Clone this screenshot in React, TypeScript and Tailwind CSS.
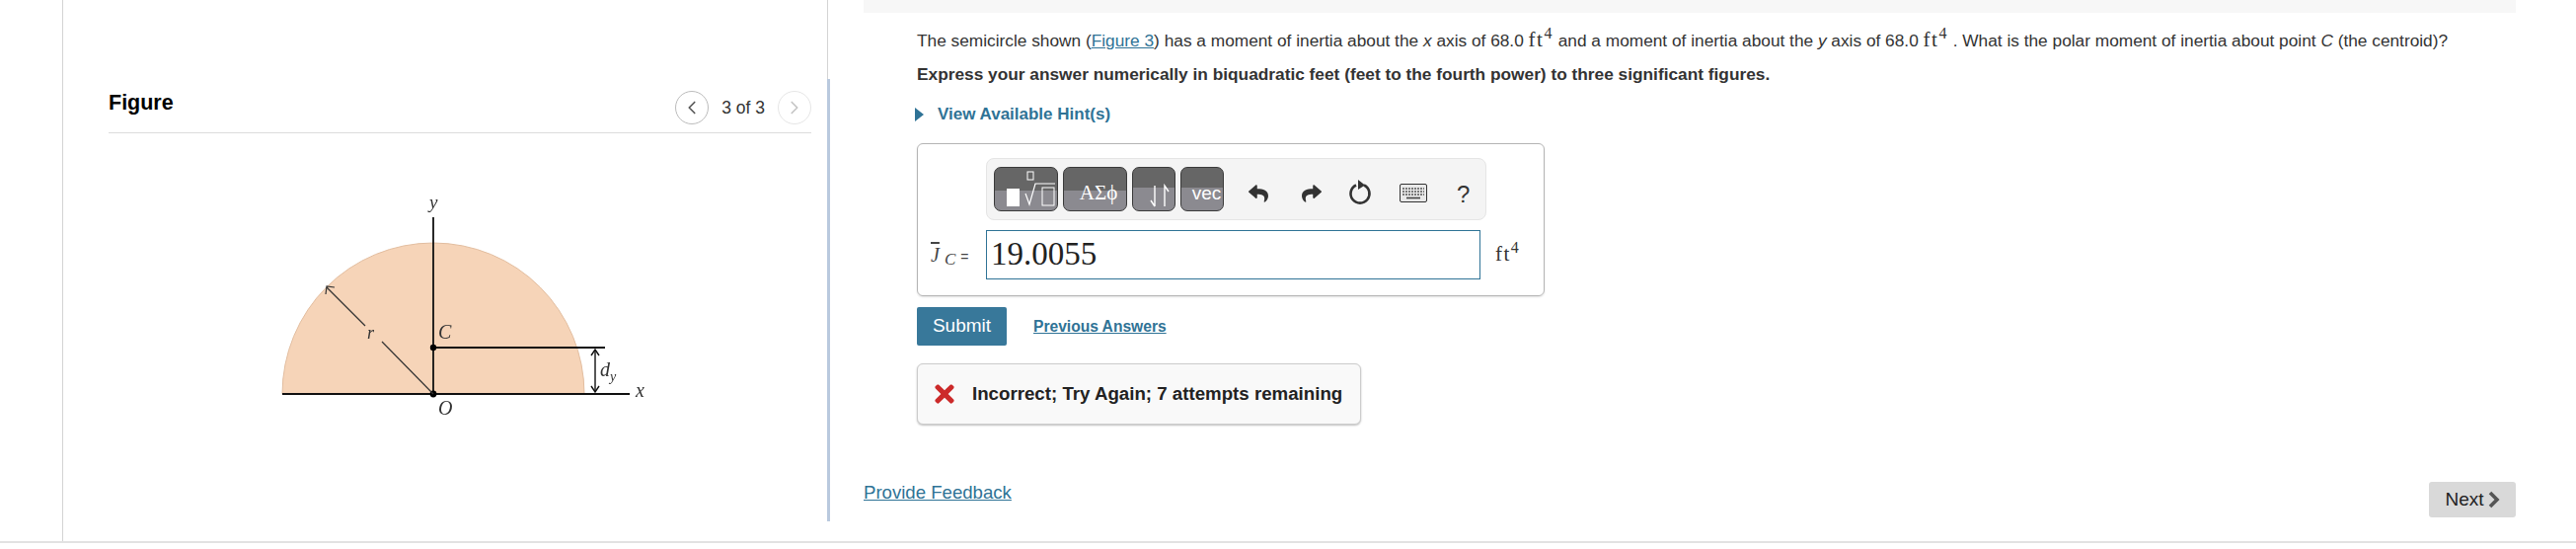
import React from 'react';
import { ChevronLeft, ChevronRight } from 'lucide-react';
import { FaReply, FaShare, FaTimes } from 'react-icons/fa';

const SERIF = 'font-["Liberation_Serif",serif]';

const Ft4: React.FC = () => (
  <span className={`${SERIF} text-[21px] tracking-[1.5px]`}>
    ft<span className="text-[16px] relative -top-[8px] leading-none">4</span>
  </span>
);

const ToolButton: React.FC<{ width: string; split: string; children: React.ReactNode }> = ({ width, split, children }) => (
  <div className={`relative h-[45px] ${width} ${split} rounded-[7px] border border-[#3a3a3a] overflow-hidden flex items-end justify-center`}>
    {children}
  </div>
);

const Diagram: React.FC = () => (
  <svg width="380" height="240" viewBox="0 -20 380 240" className="blur-[0.4px]">
    <path d="M6 189 A153 153 0 0 1 312 189 Z" fill="#f6d4b8" stroke="#e2bd9f" strokeWidth="1" />
    <line x1="159" y1="10" x2="159" y2="189" stroke="#111" strokeWidth="1.8" />
    <line x1="6" y1="189" x2="358" y2="189" stroke="#111" strokeWidth="1.8" />
    <line x1="159" y1="142" x2="333" y2="142" stroke="#111" strokeWidth="1.8" />
    <circle cx="159" cy="142" r="3.2" fill="#000" />
    <circle cx="159" cy="189" r="3.4" fill="#000" />
    <line x1="159" y1="189" x2="107" y2="136" stroke="#333" strokeWidth="1.2" />
    <line x1="90" y1="120" x2="51" y2="81" stroke="#333" strokeWidth="1.2" />
    <path d="M50 88 L51 80 L59 81" fill="none" stroke="#333" strokeWidth="1.2" />
    <line x1="323" y1="144" x2="323" y2="187" stroke="#111" strokeWidth="1.4" />
    <path d="M319 150 L323 144 L327 150 M319 181 L323 187 L327 181" fill="none" stroke="#111" strokeWidth="1.4" />
    <g fontFamily="Liberation Serif, serif" fontStyle="italic" fill="#333">
      <text x="155" y="1" fontSize="19">y</text>
      <text x="92" y="133" fontSize="18">r</text>
      <text x="164" y="133" fontSize="20">C</text>
      <text x="328" y="171" fontSize="20">d</text>
      <text x="338" y="176" fontSize="14">y</text>
      <text x="364" y="192" fontSize="20">x</text>
      <text x="164" y="210" fontSize="20">O</text>
    </g>
  </svg>
);

export default function App() {
  return (
    <div className="w-[2610px] h-[556px] bg-white overflow-hidden font-['Liberation_Sans',Arial,sans-serif] text-[#333]">
      <div className="flex h-[550px] border-b-2 border-[#e2e2e2]">
        {/* left gutter */}
        <div className="w-[64px] border-r border-[#d4d4d4]" />

        {/* figure panel */}
        <div className="w-[774px] pl-[46px] pr-[16px] pt-[92px]">
          <div className="flex items-start justify-between h-[43px] border-b border-[#dcdcdc]">
            <h2 className="mt-[1px] text-[21.5px] leading-[22px] font-bold text-black">Figure</h2>
            <div className="flex items-center gap-[13px]">
              <button className="w-[34px] h-[34px] rounded-full border border-[#bcbcbc] flex items-center justify-center">
                <ChevronLeft className="w-[22px] h-[22px] text-[#555]" strokeWidth={1.8} />
              </button>
              <span className="text-[17.5px] leading-[34px] text-[#333]">3 of 3</span>
              <button className="w-[34px] h-[34px] rounded-full border border-[#e6e6e6] flex items-center justify-center">
                <ChevronRight className="w-[22px] h-[22px] text-[#c4c4c4]" strokeWidth={1.8} />
              </button>
            </div>
          </div>
          <div className="mt-[55px] pl-[170px]">
            <Diagram />
          </div>
        </div>

        {/* divider */}
        <div className="w-[3px] flex flex-col">
          <div className="h-[80px] w-[1px] bg-[#d4d4d4]" />
          <div className="h-[448px] bg-[#b9c9de]" />
        </div>

        {/* question panel */}
        <div className="flex-1 pl-[34px] pr-[61px] flex flex-col">
          <div className="h-[13px] bg-[#f7f7f7]" />
          <div className="pl-[54px] pt-[15px]">
            <p className="h-[24px] text-[17.3px] leading-[24px] text-[#333] whitespace-nowrap">
              The semicircle shown (<a className="text-[#2f7396] underline">Figure 3</a>) has a moment of inertia about the <i>x</i> axis of 68.0 <Ft4 /> and a moment of inertia about the <i>y</i> axis of 68.0 <Ft4 /> . What is the polar moment of inertia about point <i>C</i> (the centroid)?
            </p>
            <p className="mt-[11px] text-[17.3px] leading-[24px] font-bold text-[#333]">
              Express your answer numerically in biquadratic feet (feet to the fourth power) to three significant figures.
            </p>
            <div className="mt-[19px] flex items-center gap-[14px] -ml-[2px] text-[#2f7396]">
              <span className="w-0 h-0 border-y-[7px] border-y-transparent border-l-[9px] border-l-[#2f7396]" />
              <span className="text-[17px] leading-[20px] font-bold">View Available Hint(s)</span>
            </div>

            {/* answer box */}
            <div className="mt-[19px] w-[636px] h-[155px] rounded-[6px] border border-[#b5b5b5] shadow-[0_1px_2px_rgba(0,0,0,0.12)] pl-[69px] pt-[14px]">
              <div className="w-[507px] h-[63px] rounded-[8px] border border-[#e5e5e5] bg-[#f4f4f4] flex items-center pl-[7px]">
                <div className="flex gap-[5px]">
                  <ToolButton width="w-[65px]" split="bg-[linear-gradient(#666666_0,#666666_54%,#8b8a90_54%,#8b8a90_100%)]">
                    <svg width="63" height="43" viewBox="0 0 63 43">
                      <rect x="12" y="21" width="13" height="18" fill="#fff" />
                      <rect x="33" y="4" width="6" height="8" fill="none" stroke="#fff" />
                      <path d="M31 26 L35 37 L41 16 H61" fill="none" stroke="#fff" strokeWidth="1.2" />
                      <rect x="48" y="20" width="12" height="18" fill="none" stroke="#fff" />
                    </svg>
                  </ToolButton>
                  <ToolButton width="w-[65px]" split="bg-[linear-gradient(#666666_0,#666666_54%,#8b8a90_54%,#8b8a90_100%)]">
                    <span className={`${SERIF} text-[21px] leading-[36px] pl-[7px] text-white`}>ΑΣϕ</span>
                  </ToolButton>
                  <ToolButton width="w-[44px]" split="bg-[linear-gradient(#666666_0,#666666_46%,#8b8a90_46%,#8b8a90_100%)]">
                    <svg width="42" height="43" viewBox="0 0 42 43">
                      <path d="M22 18 V39 M22 39 L18 33 M32 39 V18 L36 24" fill="none" stroke="#fff" strokeWidth="1.4" />
                    </svg>
                  </ToolButton>
                  <ToolButton width="w-[44px]" split="bg-[linear-gradient(#666666_0,#666666_46%,#8b8a90_46%,#8b8a90_100%)]">
                    <span className="text-[19px] leading-[34px] pl-[9px] text-white">vec</span>
                  </ToolButton>
                </div>
                <FaReply className="ml-[25px] w-[20px] h-[20px] text-[#333] translate-y-[4px]" />
                <FaShare className="ml-[34px] w-[20px] h-[20px] text-[#333] translate-y-[4px]" />
                <svg width="24" height="28" viewBox="0 0 24 28" className="ml-[27px] translate-y-[3px]">
                  <path d="M8 6.5 A9.5 9.5 0 1 0 16 6.5" fill="none" stroke="#333" strokeWidth="2.6" />
                  <path d="M10 1 L17 6.5 L10 11 Z" fill="#333" />
                </svg>
                <svg width="28" height="19" viewBox="0 0 28 19" className="ml-[28px] translate-y-[4px]">
                  <rect x="0.5" y="0.5" width="27" height="18" rx="1.5" fill="#e9e9e9" stroke="#333" />
                  <path d="M3 5 H25 M3 8 H25 M3 11 H25" stroke="#555" strokeWidth="1.4" strokeDasharray="2 1" />
                  <path d="M7 14.5 H21" stroke="#444" strokeWidth="1.6" />
                </svg>
                <span className="ml-[30px] text-[24px] leading-none text-[#333] translate-y-[5px]">?</span>
              </div>
              <div className="mt-[10px] flex items-center -ml-[56px]">
                <span className={`${SERIF} w-[56px] text-[20px] whitespace-nowrap text-[#444]`}>
                  <i className="overline">J</i> <i className="text-[17px] relative top-[3px]">C</i> <span className="font-['Liberation_Sans'] text-[14px]">=</span>
                </span>
                <div className={`${SERIF} w-[501px] h-[50px] border border-[#2f7396] pl-[4px] text-[33px] leading-[46px] text-[#222]`}>
                  19.0055
                </div>
                <span className="ml-[15px]"><Ft4 /></span>
              </div>
            </div>

            {/* submit row */}
            <div className="mt-[11px] flex items-center gap-[27px]">
              <button className="w-[91px] h-[39px] rounded-[2px] bg-[#38789a] text-white text-[19px]">Submit</button>
              <a className="text-[#2f7396] text-[15.6px] font-bold underline">Previous Answers</a>
            </div>

            {/* feedback */}
            <div className="mt-[18px] w-[450px] h-[62px] rounded-[6px] border border-[#cccccc] bg-[#f9f9f9] shadow-[0_1px_2px_rgba(0,0,0,0.25)] flex items-center pl-[17px] gap-[18px]">
              <FaTimes className="w-[20px] h-[28px] text-[#cc2a2a]" />
              <span className="text-[18.7px] font-bold text-[#222] whitespace-nowrap">Incorrect; Try Again; 7 attempts remaining</span>
            </div>
          </div>

          <div className="mt-[57px] flex items-start justify-between">
            <a className="text-[18.6px] leading-[24px] text-[#2f7396] underline">Provide Feedback</a>
            <button className="mt-[1px] w-[88px] h-[36px] rounded-[3px] bg-[#d9d9d9] flex items-center justify-center gap-[3px] text-[19px] text-[#222]">
              Next
              <svg width="13" height="18" viewBox="0 0 13 18">
                <path d="M3 2 L10 9 L3 16" fill="none" stroke="#555" strokeWidth="3.6" />
              </svg>
            </button>
          </div>
        </div>
      </div>
    </div>
  );
}
